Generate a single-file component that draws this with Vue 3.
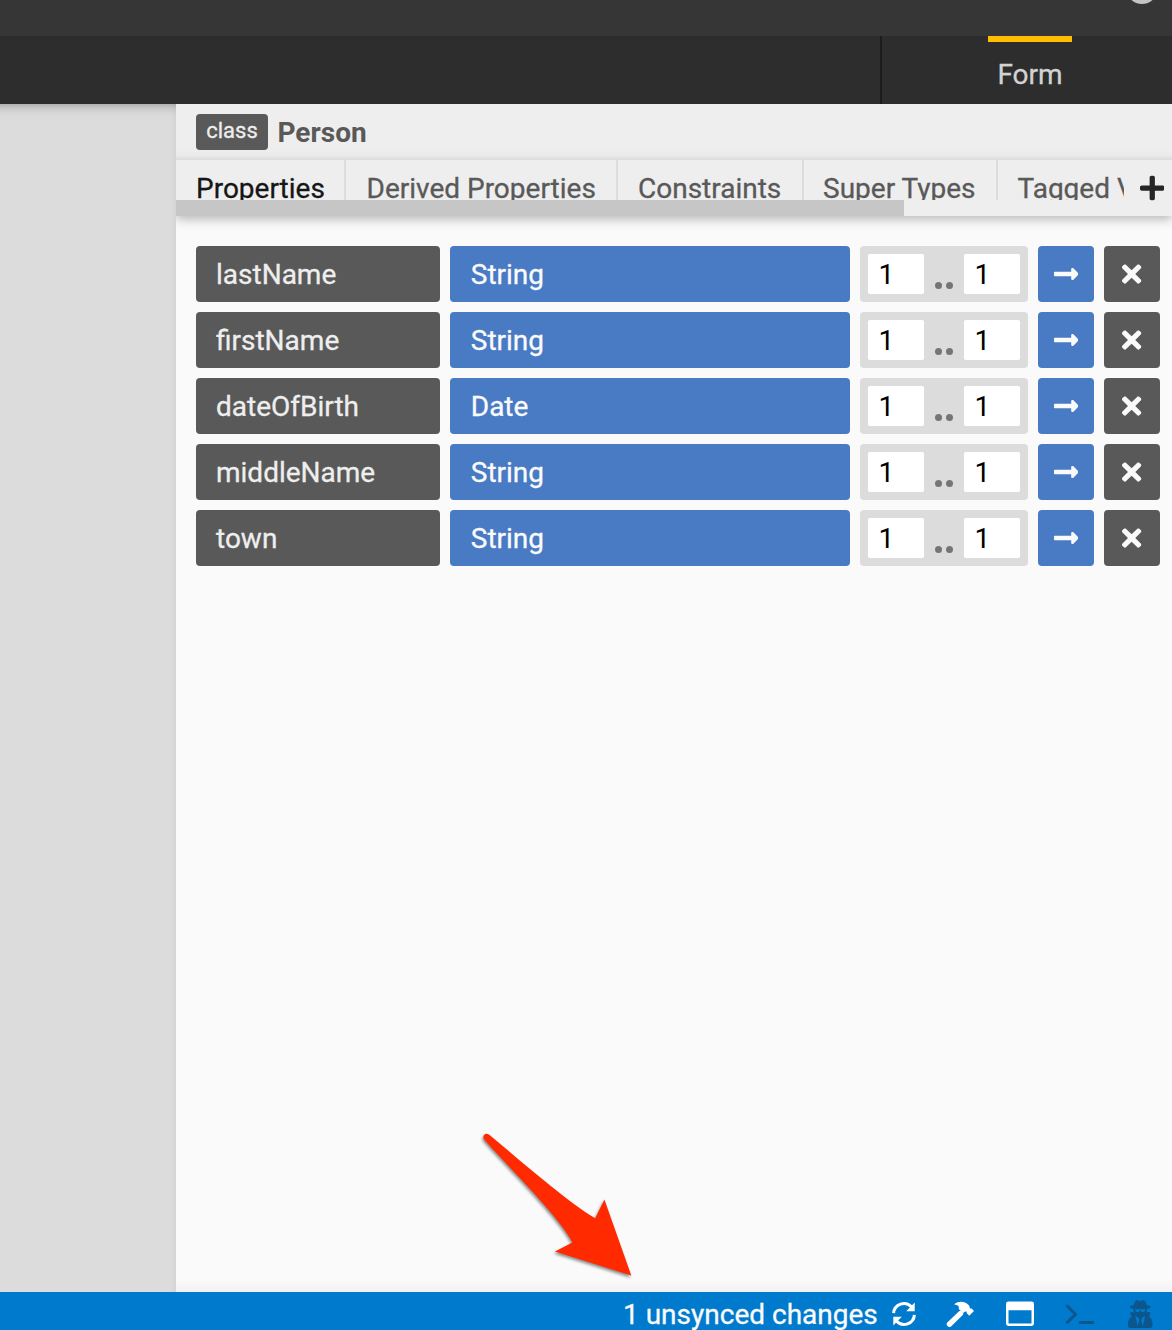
<script setup>
const tabs = [
  { label: 'Properties', cls: 'w1' },
  { label: 'Derived Properties', cls: 'w2' },
  { label: 'Constraints', cls: 'w3' },
  { label: 'Super Types', cls: 'w4' },
  { label: 'Tagged Values', cls: 'w5' },
]
const rows = [
  { name: 'lastName', type: 'String' },
  { name: 'firstName', type: 'String' },
  { name: 'dateOfBirth', type: 'Date' },
  { name: 'middleName', type: 'String' },
  { name: 'town', type: 'String' },
]
</script>

<template>
  <div class="app">
    <header class="topbar"><span class="avatar"></span></header>
    <nav class="modes">
      <div class="mode"><span class="mode-label">Form</span></div>
    </nav>
    <main class="body">
      <aside class="canvas"></aside>
      <section class="panel">
        <div class="title">
          <span class="badge">class</span>
          <span class="name">Person</span>
        </div>
        <div class="tabbar">
          <div class="scroller">
            <div class="tabs">
              <div v-for="(t, i) in tabs" :key="t.label" class="tab" :class="[t.cls, { active: i === 0 }]">{{ t.label }}</div>
            </div>
            <div class="track"><div class="thumb"></div></div>
          </div>
          <button class="add" aria-label="Add">
            <svg viewBox="0 0 448 512" width="24.5" height="28"><path d="M416 208H272V64c0-17.67-14.33-32-32-32h-32c-17.67 0-32 14.33-32 32v144H32c-17.67 0-32 14.33-32 32v32c0 17.67 14.33 32 32 32h144v144c0 17.67 14.33 32 32 32h32c17.67 0 32-14.33 32-32V304h144c17.67 0 32-14.33 32-32v-32c0-17.67-14.33-32-32-32z" /></svg>
          </button>
        </div>
        <div class="list">
          <div v-for="r in rows" :key="r.name" class="row">
            <div class="field">{{ r.name }}</div>
            <div class="type">{{ r.type }}</div>
            <div class="multi">
              <span class="num">1</span>
              <span class="dots"><i></i><i></i></span>
              <span class="num">1</span>
            </div>
            <button class="btn go" aria-label="Open type">
              <svg viewBox="0 0 448 512" width="24.5" height="28"><path d="M313.941 216H12c-6.627 0-12 5.373-12 12v56c0 6.627 5.373 12 12 12h301.941v46.059c0 21.382 25.851 32.09 40.971 16.971l86.059-86.059c9.373-9.373 9.373-24.569 0-33.941l-86.059-86.059c-15.119-15.12-40.971-4.411-40.971 16.971V216z" /></svg>
            </button>
            <button class="btn del" aria-label="Remove">
              <svg viewBox="0 0 352 512" width="19.25" height="28"><path d="M242.72 256l100.07-100.07c12.28-12.28 12.28-32.19 0-44.48l-22.24-22.24c-12.28-12.28-32.19-12.28-44.48 0L176 189.28 75.93 89.21c-12.28-12.28-32.19-12.28-44.48 0L9.21 111.45c-12.28 12.28-12.28 32.19 0 44.48L109.28 256 9.21 356.07c-12.28 12.28-12.28 32.19 0 44.48l22.24 22.24c12.28 12.28 32.2 12.28 44.48 0L176 322.72l100.07 100.07c12.28 12.28 32.2 12.28 44.48 0l22.24-22.24c12.28-12.28 12.28-32.19 0-44.48L242.72 256z" /></svg>
            </button>
          </div>
        </div>
      </section>
    </main>
    <footer class="status">
      <span class="changes">1 unsynced changes</span>
      <svg class="ic sync" viewBox="0 0 28 28" width="28" height="28">
        <g fill="none" stroke="#fff" stroke-width="3">
          <path d="M3.6 13.2A10.4 10.4 0 0 1 21.6 6.9" />
          <path d="M24.4 14.8A10.4 10.4 0 0 1 6.4 21.1" />
        </g>
        <path fill="#fff" d="M24.7 2.6V11.2H16.2ZM3.3 25.4V16.8H11.8Z" />
      </svg>
      <svg class="ic hammer" viewBox="0 0 28 28" width="28" height="28">
        <path d="M13.2 11.6L2.2 22.2" transform="translate(1.2 2)" stroke="#fff" stroke-width="5.4" stroke-linecap="round" />
        <path fill="#fff" d="M8.6 3.9C12.4 1 18.7 1 22.6 4.9C24 6.4 23.5 7.9 24.4 8.7L25.4 8.3L28 10.9L23.2 15.7L20.6 13.1L20.8 11.9C19.6 10.9 18.3 11.9 17.2 13L12.7 8.9C13.6 6.6 12 4.8 8.6 4.8Z" />
      </svg>
      <svg class="ic window" viewBox="0 0 28 28" width="28" height="28">
        <path fill="#fff" fill-rule="evenodd" d="M2.4 1.5H25.6Q28 1.5 28 3.9V23.6Q28 26 25.6 26H2.4Q0 26 0 23.6V3.9Q0 1.5 2.4 1.5ZM2.5 10.2V23Q2.5 23.6 3.1 23.6H24.9Q25.5 23.6 25.5 23V10.2Z" />
      </svg>
      <svg class="ic term" viewBox="0 0 30 28" width="30" height="28">
        <g fill="none" stroke="#0b568c" stroke-width="3" stroke-linecap="round" stroke-linejoin="round">
          <path d="M2.4 6.2L10.6 14.2L2.4 22.2" /><path d="M15.2 22.4H27.6" />
        </g>
      </svg>
      <svg class="ic secret" viewBox="0 0 448 512" width="24.5" height="28"><path fill="#0b568c" d="M383.9 308.3l23.9-62.6c4-10.5-3.7-21.7-15-21.7h-58.5c11-18.9 17.8-40.6 17.8-64v-.3c39.2-7.8 64-19.1 64-31.7 0-13.3-27.3-25.1-70.1-33-9.2-32.8-27-65.8-40.6-82.8-9.5-11.9-25.9-15.6-39.5-8.8l-27.6 13.8c-9 4.5-19.6 4.5-28.6 0L182.1 3.4c-13.6-6.8-30-3.1-39.5 8.8-13.5 17-31.4 50-40.6 82.8-42.7 7.9-70 19.7-70 33 0 12.6 24.8 23.9 64 31.7v.3c0 23.4 6.8 45.1 17.8 64H56.3c-11.5 0-19.2 11.7-14.7 22.3l25.8 60.2C27.3 329.8 0 372.7 0 422.4v44.8C0 491.9 20.1 512 44.8 512h358.4c24.7 0 44.8-20.1 44.8-44.8v-44.8c0-48.4-25.8-90.4-64.1-114.1zM176 480l-41.6-192 49.6 32 24 40-32 120zm96 0l-32-120 24-40 49.6-32L272 480zm41.7-298.5c-3.9 11.9-7 24.6-16.5 33.4-10.1 9.3-48 22.4-64-25-2.8-8.4-15.4-8.4-18.3 0-17 50.2-56 32.4-64 25-9.5-8.8-12.7-21.5-16.5-33.4-.8-2.5-6.3-5.7-6.3-5.8v-10.8c28.3 3.6 61 5.8 96 5.8s67.7-2.1 96-5.8v10.8c-.1.1-5.6 3.2-6.4 5.8z" /></svg>
    </footer>
    <svg class="pointer" viewBox="470 1120 180 170" width="180" height="170">
      <path fill="#ff2a00" d="M489 1134.6C520 1160 566 1201 595.2 1218.2L604.4 1199.6L631.3 1275.6L555 1251.6L572.4 1242.4C560 1218 515 1174 484 1139.2C481.8 1135.6 485.6 1132 489 1134.6Z" />
    </svg>
  </div>
</template>

<style>
body { margin: 0; }
</style>

<style scoped>
.app {
  position: relative;
  display: flex;
  flex-direction: column;
  width: 1172px;
  height: 1330px;
  overflow: hidden;
  font-family: Roboto, sans-serif;
  font-size: 28px;
  line-height: 32px;
  -webkit-text-stroke: .3px currentColor;
}
button { border: 0; padding: 0; font: inherit; }
.topbar { position: relative; flex: none; height: 36px; background: #363636; }
.avatar {
  position: absolute;
  left: 1126px;
  top: -28px;
  width: 32px;
  height: 32px;
  border-radius: 50%;
  background: #c4c4c4;
}
.modes {
  flex: none;
  display: flex;
  justify-content: flex-end;
  height: 68px;
  background: #2d2d2d;
}
.mode {
  box-sizing: border-box;
  width: 292px;
  padding-left: 106px;
  border-left: 2px solid #1c1c1c;
}
.mode-label {
  display: block;
  box-sizing: border-box;
  width: 84px;
  height: 68px;
  padding-top: 17px;
  border-top: 6px solid #ffbf00;
  color: #d2d2d2;
  text-align: center;
}
.body { flex: 1; display: flex; min-height: 0; }
.canvas {
  width: 176px;
  background:
    linear-gradient(to left, rgba(0, 0, 0, .035), transparent 6px),
    linear-gradient(rgba(0, 0, 0, .2), rgba(0, 0, 0, .09) 4px, rgba(0, 0, 0, .025) 9px, transparent 14px),
    #dcdcdc;
}
.panel {
  width: 996px;
  display: flex;
  flex-direction: column;
  background: linear-gradient(to top, #f1f1f1, #fafafa 12px);
}
.title {
  flex: none;
  box-sizing: border-box;
  display: flex;
  height: 56px;
  padding: 10px 20px 0;
  background: linear-gradient(to top, #dcdcdc, #ebebeb 5px, #eee 12px);
}
.badge {
  height: 36px;
  width: 72px;
  border-radius: 4px;
  background: #595959;
  color: #eee;
  font-size: 22px;
  line-height: 34px;
  text-align: center;
}
.name { margin-left: 9.5px; line-height: 37px; font-weight: 700; color: #595959; -webkit-text-stroke: 0; }
.tabbar {
  flex: none;
  display: flex;
  height: 56px;
  background: #eee;
  box-shadow: 0 3px 10px rgba(0, 0, 0, .28);
  clip-path: inset(0 0 -20px 0);
}
.scroller { width: 948px; overflow: hidden; }
.tabs { display: flex; height: 40px; overflow: hidden; }
.tab {
  box-sizing: border-box;
  flex: none;
  height: 56px;
  padding: 13px 0 0 20px;
  border-right: 2px solid #dcdcdc;
  color: #595959;
  white-space: nowrap;
}
.tab.active { color: #161616; }
.w1 { width: 170px; }
.w2 { width: 272px; padding-left: 20.5px; }
.w3 { width: 186px; }
.w4 { width: 194px; padding-left: 19px; }
.w5 { width: 220px; padding-left: 19.5px; }
.track { height: 16px; }
.thumb { width: 728px; height: 16px; background: #c6c6c6; }
.add { width: 48px; height: 56px; background: #eee; display: flex; align-items: center; padding-left: 15.75px; fill: #252525; }
.add svg { flex: none; }
.list { display: flex; flex-direction: column; gap: 10px; padding: 30px 12px 0 20px; }
.row { display: flex; gap: 10px; height: 56px; line-height: 58px; }
.field, .type { box-sizing: border-box; border-radius: 4px; padding-left: 20px; }
.field { width: 244px; background: #595959; color: #eee; }
.type { width: 400px; padding-left: 20.75px; background: #487bc4; color: #fafafa; }
.multi {
  box-sizing: border-box;
  display: flex;
  justify-content: space-between;
  width: 168px;
  padding: 8px;
  border-radius: 4px;
  background: #dcdcdc;
}
.num {
  box-sizing: border-box;
  width: 56px;
  height: 40px;
  padding-left: 10.5px;
  border-radius: 2px;
  background: #fff;
  color: #000;
  line-height: 42px;
  -webkit-text-stroke: 0;
}
.dots { display: flex; gap: 4.5px; padding: 27.5px 0 0; }
.dots i { width: 7px; height: 7px; border-radius: 50%; background: #757575; }
.btn { display: flex; align-items: center; justify-content: center; width: 56px; height: 56px; border-radius: 4px; fill: #fafafa; }
.go { background: #487bc4; }
.del { background: #595959; }
.status {
  flex: none;
  box-sizing: border-box;
  display: flex;
  height: 38px;
  padding: 0 20px 0 623px;
  background: #007acc;
  color: #fafafa;
}
.changes { width: 267px; line-height: 46px; white-space: nowrap; }
.ic { flex: none; margin-top: 8px; overflow: visible; }
.hammer { margin-left: 28px; }
.window { margin-left: 32px; }
.term { margin-left: 31px; }
.secret { margin-left: 32.5px; }
.pointer {
  position: absolute;
  left: 470px;
  top: 1120px;
  filter: drop-shadow(-1px 2px 1.5px rgba(0, 0, 0, .45));
}
</style>
